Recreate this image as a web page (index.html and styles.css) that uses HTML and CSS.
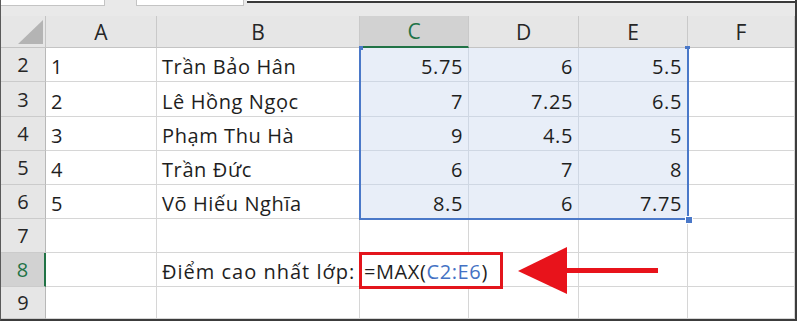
FILE: index.html
```html
<!DOCTYPE html>
<html lang="vi">
<head>
    <meta charset="UTF-8">
    <title>MAX - Điểm cao nhất lớp</title>
    <link rel="stylesheet" href="styles.css">
</head>
<body>
    <div class="window">
        <!-- name box / formula bar remnants -->
        <div class="topbar">
            <div class="box box-name"></div>
            <div class="box box-fx"></div>
            <div class="box box-formula"></div>
        </div>

        <div class="sheet">
            <div class="grid">
                <div class="hd corner"><span class="tri"></span></div>
                <div class="hd col">A</div>
                <div class="hd col">B</div>
                <div class="hd col active-col">C</div>
                <div class="hd col">D</div>
                <div class="hd col">E</div>
                <div class="hd col">F</div>

                <div class="hd row">2</div>
                <div class="c">1</div>
                <div class="c">Trần Bảo Hân</div>
                <div class="c n sel">5.75</div>
                <div class="c n sel">6</div>
                <div class="c n sel">5.5</div>
                <div class="c"></div>

                <div class="hd row">3</div>
                <div class="c">2</div>
                <div class="c">Lê Hồng Ngọc</div>
                <div class="c n sel">7</div>
                <div class="c n sel">7.25</div>
                <div class="c n sel">6.5</div>
                <div class="c"></div>

                <div class="hd row">4</div>
                <div class="c">3</div>
                <div class="c">Phạm Thu Hà</div>
                <div class="c n sel">9</div>
                <div class="c n sel">4.5</div>
                <div class="c n sel">5</div>
                <div class="c"></div>

                <div class="hd row">5</div>
                <div class="c">4</div>
                <div class="c">Trần Đức</div>
                <div class="c n sel">6</div>
                <div class="c n sel">7</div>
                <div class="c n sel">8</div>
                <div class="c"></div>

                <div class="hd row">6</div>
                <div class="c">5</div>
                <div class="c">Võ Hiếu Nghĩa</div>
                <div class="c n sel">8.5</div>
                <div class="c n sel">6</div>
                <div class="c n sel">7.75</div>
                <div class="c"></div>

                <div class="hd row">7</div>
                <div class="c"></div>
                <div class="c"></div>
                <div class="c"></div>
                <div class="c"></div>
                <div class="c"></div>
                <div class="c"></div>

                <div class="hd row active-row">8</div>
                <div class="c"></div>
                <div class="c label">Điểm cao nhất lớp:</div>
                <div class="c spill">=MAX(<span class="ref">C2:E6</span>)</div>
                <div class="c"></div>
                <div class="c"></div>
                <div class="c"></div>

                <div class="hd row">9</div>
                <div class="c"></div>
                <div class="c"></div>
                <div class="c"></div>
                <div class="c"></div>
                <div class="c"></div>
                <div class="c"></div>
            </div>

            <!-- range C2:E6 outline with its handles -->
            <div class="range">
                <span class="handle tl"></span>
                <span class="handle tr"></span>
                <span class="handle br"></span>
            </div>

            <!-- callout on the formula -->
            <div class="callout"></div>
            <svg class="arrow" width="146" height="52" viewBox="0 0 146 52">
                <polygon points="2,26 51,2 51,49" fill="#e8131b"/>
                <rect x="48" y="23" width="94" height="5" fill="#e8131b"/>
            </svg>
        </div>
    </div>
</body>
</html>
```

FILE: styles.css
```css
body {
    margin: 0;
    background: #fff;
    font-family: "Open Sans", "Noto Sans", sans-serif;
}
.window {
    width: 794px;
    border-left: 1px solid #5a5a5a;
    border-right: 2px solid #3c3c3c;
    border-bottom: 2px solid #3c3c3c;
    background: #e6e6e6;
}
.topbar {
    height: 16px;
    display: flex;
    align-items: flex-start;
    background: #e9e9e9;
}
.box {
    height: 5px;
    background: #fff;
    border-bottom: 1px solid #c4c4c4;
}
.box-name {
    width: 103px;
    border-right: 1px solid #c4c4c4;
}
.box-fx {
    width: 106px;
    margin-left: 31px;
    border-left: 1px solid #c4c4c4;
    border-right: 1px solid #c4c4c4;
}
.box-formula {
    flex: 1;
    margin-left: 3px;
    height: 1px;
    border-bottom: 2px solid #3a3a3a;
    background: #fff;
}
.sheet {
    position: relative;
}
.grid {
    display: grid;
    grid-template-columns: 45px 111px 203px 109px 110px 109px 107px;
    grid-template-rows: 32px 34px 35px 34px 34px 34px 34px 34px 32px;
}
.hd {
    background: #e6e6e6;
    color: #262626;
    font-size: 21px;
    display: flex;
    align-items: center;
    justify-content: center;
    box-sizing: border-box;
}
.col {
    border-right: 1px solid #c9c9c9;
    border-bottom: 1px solid #c4c4c4;
}
.row {
    border-right: 1px solid #b8b8b8;
    border-bottom: 1px solid #cbcbcb;
    font-size: 20px;
}
.corner {
    border-right: 1px solid #c4c4c4;
    border-bottom: 1px solid #c4c4c4;
    position: relative;
}
.tri {
    position: absolute;
    left: 17px;
    top: 4px;
    width: 25px;
    height: 24px;
    background: #b4b4b4;
    clip-path: polygon(100% 0, 100% 100%, 0 100%);
}
.active-col {
    background: #d2d2d2;
    color: #217346;
    border-bottom: 2px solid #217346;
}
.active-row {
    background: #d2d2d2;
    color: #217346;
    border-right: 2px solid #217346;
}
.c {
    background: #fff;
    color: #1e1e1e;
    font-size: 20px;
    letter-spacing: 0.6px;
    white-space: nowrap;
    display: flex;
    align-items: flex-end;
    padding: 0 5px 1px 5px;
    box-sizing: border-box;
    border-right: 1px solid #d6d6d6;
    border-bottom: 1px solid #d6d6d6;
}
.c.n {
    justify-content: flex-end;
}
.c.sel {
    background: #e8eef8;
    border-color: #cfd7e3;
}
.c.label {
    letter-spacing: 1px;
}
/* formula text runs on into D8, so it sits above the next cell */
.c.spill {
    position: relative;
    z-index: 1;
    border-right: none;
    padding-left: 4px;
    overflow: visible;
}
.ref {
    color: #4472c4;
}
.range {
    position: absolute;
    left: 358px;
    top: 32px;
    width: 330px;
    height: 172px;
    box-sizing: border-box;
    border: 2px solid #4a78c8;
    border-top: none;
}
.handle {
    position: absolute;
    background: #4a78c8;
}
.handle.tl {
    left: -2px;
    top: -2px;
    width: 4px;
    height: 4px;
}
.handle.tr {
    right: -3px;
    top: -2px;
    width: 5px;
    height: 3px;
}
.handle.br {
    width: 6px;
    height: 6px;
    border: 1px solid #fff;
    right: -6px;
    bottom: -6px;
}
.callout {
    position: absolute;
    z-index: 2;
    left: 358px;
    top: 236px;
    width: 144px;
    height: 37px;
    box-sizing: border-box;
    border: 3px solid #e3151c;
}
.arrow {
    position: absolute;
    left: 515px;
    top: 229px;
}
```
